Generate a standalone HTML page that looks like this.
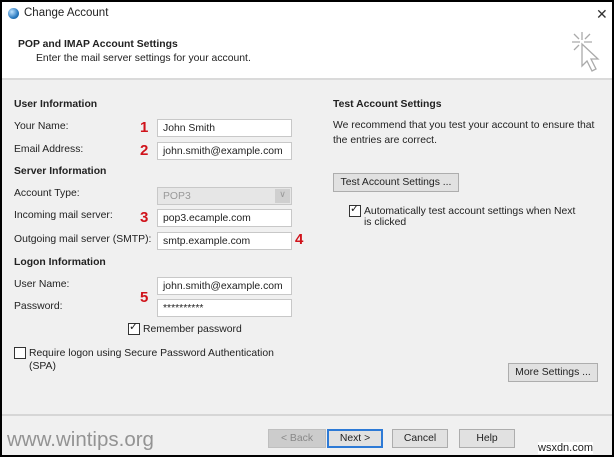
<!DOCTYPE html>
<html><head><style>
*{margin:0;padding:0;box-sizing:border-box}
body{width:614px;height:457px;background:#000;font-family:"Liberation Sans",sans-serif;font-size:10.4px;color:#222;position:relative;overflow:hidden}
#w{position:absolute;left:2px;top:2px;right:2px;bottom:2px;background:#f0f0f0}
.a{position:absolute;white-space:nowrap}
.b{font-weight:bold}
.in{position:absolute;background:#fff;border:1px solid #c8c8c8;height:18px;padding:3px 0 0 5px;white-space:nowrap;overflow:hidden}
.btn{position:absolute;background:#e1e1e1;border:1px solid #adadad;height:19px;text-align:center;padding-top:3px;white-space:nowrap}
.cb{position:absolute;width:12px;height:12px;border:1px solid #333;background:#fff}
.r{position:absolute;color:#d0131b;font-weight:bold;font-size:15px}
</style></head><body><div id="w">
<div style="position:absolute;left:0;top:0;right:0;height:78px;background:#fff;border-bottom:2px solid #dadada"></div>
<div style="position:absolute;left:6px;top:6px;width:11px;height:11px;border-radius:50%;background:radial-gradient(circle at 35% 35%,#bfe3ff,#2a7ac0 60%,#0b4f8a)"></div>
<div class="a" style="left:22px;top:5px;font-size:11.5px">Change Account</div>
<div class="a" style="left:594px;top:4px;font-size:14px;color:#333">✕</div>
<div class="a b" style="left:16px;top:37px">POP and IMAP Account Settings</div>
<div class="a" style="left:34px;top:51px">Enter the mail server settings for your account.</div>
<svg style="position:absolute;left:570px;top:30px" width="32" height="46" viewBox="0 0 32 46" fill="none" stroke="#aaa" stroke-width="1.3"><path d="M10 0v8M0 10h8M12 10h8M2 2l5 5M18 2l-5 5M2 18l5-5"/><path d="M10 12l0 22 5-5 5 10 4-2-5-10 7 0z" fill="#fff"/></svg>

<div class="a b" style="left:12px;top:97px">User Information</div>
<div class="a" style="left:12px;top:119px">Your Name:</div>
<div class="r" style="left:138px;top:117px">1</div>
<div class="in" style="left:155px;top:117px;width:135px">John Smith</div>
<div class="a" style="left:12px;top:142px">Email Address:</div>
<div class="r" style="left:138px;top:140px">2</div>
<div class="in" style="left:155px;top:140px;width:135px">john.smith@example.com</div>
<div class="a b" style="left:12px;top:164px">Server Information</div>
<div class="a" style="left:12px;top:186px">Account Type:</div>
<div class="in" style="left:155px;top:185px;width:135px;background:#e6e6e6;color:#999">POP3<span style="position:absolute;right:1px;top:1px;width:15px;height:14px;background:#cfcfcf;color:#999;font-size:9px;text-align:center">∨</span></div>
<div class="a" style="left:12px;top:208px">Incoming mail server:</div>
<div class="r" style="left:138px;top:207px">3</div>
<div class="in" style="left:155px;top:207px;width:135px">pop3.ecample.com</div>
<div class="a" style="left:12px;top:232px">Outgoing mail server (SMTP):</div>
<div class="r" style="left:293px;top:229px">4</div>
<div class="in" style="left:155px;top:230px;width:135px">smtp.example.com</div>
<div class="a b" style="left:12px;top:255px">Logon Information</div>
<div class="a" style="left:12px;top:277px">User Name:</div>
<div class="in" style="left:155px;top:275px;width:135px">john.smith@example.com</div>
<div class="a" style="left:12px;top:299px">Password:</div>
<div class="r" style="left:138px;top:287px">5</div>
<div class="in" style="left:155px;top:297px;width:135px">**********</div>
<div class="cb" style="left:126px;top:321px"></div><div class="a" style="left:127px;top:318px;font-size:11px">✓</div>
<div class="a" style="left:141px;top:322px">Remember password</div>
<div class="cb" style="left:12px;top:345px"></div>
<div class="a" style="left:27px;top:346px">Require logon using Secure Password Authentication</div>
<div class="a" style="left:27px;top:359px">(SPA)</div>

<div class="a b" style="left:331px;top:97px">Test Account Settings</div>
<div class="a" style="left:331px;top:118px">We recommend that you test your account to ensure that</div>
<div class="a" style="left:331px;top:133px">the entries are correct.</div>
<div class="btn" style="left:331px;top:171px;width:126px">Test Account Settings ...</div>
<div class="cb" style="left:347px;top:203px"></div><div class="a" style="left:348px;top:200px;font-size:11px">✓</div>
<div class="a" style="left:362px;top:204px">Automatically test account settings when Next</div>
<div class="a" style="left:362px;top:215px">is clicked</div>
<div class="btn" style="left:506px;top:361px;width:90px">More Settings ...</div>

<div style="position:absolute;left:0;right:0;top:412px;height:2px;background:#d6d6d6"></div>
<div class="a" style="left:5px;top:426px;font-size:20.5px;color:#939393">www.wintips.org</div>
<div class="btn" style="left:266px;top:427px;width:58px;background:#ccc;border-color:#bfbfbf;color:#888">&lt; Back</div>
<div class="btn" style="left:325px;top:427px;width:56px;border:2px solid #2d7ad6;padding-top:2px">Next &gt;</div>
<div class="btn" style="left:390px;top:427px;width:56px">Cancel</div>
<div class="btn" style="left:457px;top:427px;width:56px">Help</div>
<div class="a" style="left:536px;top:440px;font-size:11px;color:#222;background:#fff">wsxdn.com</div>
</div></body></html>
